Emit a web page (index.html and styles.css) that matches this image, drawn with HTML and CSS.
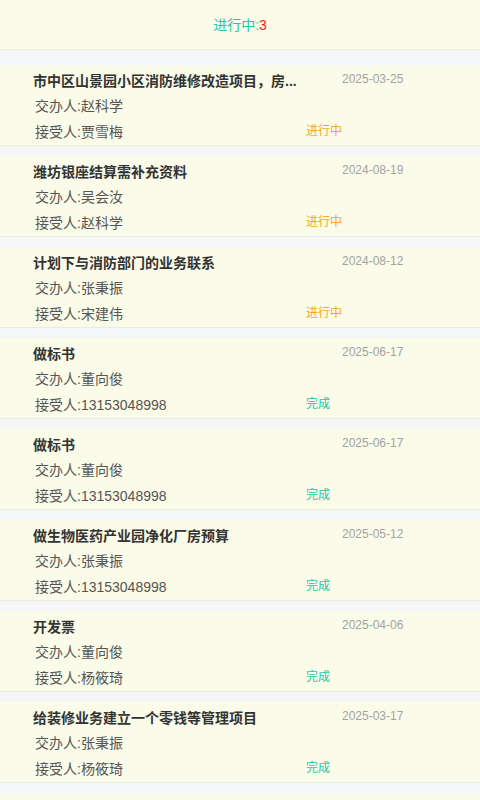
FILE: index.html
```html
<!DOCTYPE html>
<html lang="zh-CN">
<head>
    <meta charset="UTF-8">
    <meta name="viewport" content="width=device-width, initial-scale=1.0">
    <title>任务列表</title>
    <link rel="stylesheet" href="styles.css">
</head>
<body>
    <header class="summary">
        <span class="summary-label">进行中:</span><span class="summary-count">3</span>
    </header>

    <div class="task-list">
        <div class="task">
            <div class="task-row">
                <div class="task-title">市中区山景园小区消防维修改造项目，房...</div>
                <div class="task-date">2025-03-25</div>
            </div>
            <div class="task-row task-person">交办人:赵科学</div>
            <div class="task-row">
                <div class="task-person task-receiver">接受人:贾雪梅</div>
                <div class="task-status doing">进行中</div>
            </div>
        </div>

        <div class="task">
            <div class="task-row">
                <div class="task-title">潍坊银座结算需补充资料</div>
                <div class="task-date">2024-08-19</div>
            </div>
            <div class="task-row task-person">交办人:吴会汝</div>
            <div class="task-row">
                <div class="task-person task-receiver">接受人:赵科学</div>
                <div class="task-status doing">进行中</div>
            </div>
        </div>

        <div class="task">
            <div class="task-row">
                <div class="task-title">计划下与消防部门的业务联系</div>
                <div class="task-date">2024-08-12</div>
            </div>
            <div class="task-row task-person">交办人:张秉振</div>
            <div class="task-row">
                <div class="task-person task-receiver">接受人:宋建伟</div>
                <div class="task-status doing">进行中</div>
            </div>
        </div>

        <div class="task">
            <div class="task-row">
                <div class="task-title">做标书</div>
                <div class="task-date">2025-06-17</div>
            </div>
            <div class="task-row task-person">交办人:董向俊</div>
            <div class="task-row">
                <div class="task-person task-receiver">接受人:13153048998</div>
                <div class="task-status done">完成</div>
            </div>
        </div>

        <div class="task">
            <div class="task-row">
                <div class="task-title">做标书</div>
                <div class="task-date">2025-06-17</div>
            </div>
            <div class="task-row task-person">交办人:董向俊</div>
            <div class="task-row">
                <div class="task-person task-receiver">接受人:13153048998</div>
                <div class="task-status done">完成</div>
            </div>
        </div>

        <div class="task">
            <div class="task-row">
                <div class="task-title">做生物医药产业园净化厂房预算</div>
                <div class="task-date">2025-05-12</div>
            </div>
            <div class="task-row task-person">交办人:张秉振</div>
            <div class="task-row">
                <div class="task-person task-receiver">接受人:13153048998</div>
                <div class="task-status done">完成</div>
            </div>
        </div>

        <div class="task">
            <div class="task-row">
                <div class="task-title">开发票</div>
                <div class="task-date">2025-04-06</div>
            </div>
            <div class="task-row task-person">交办人:董向俊</div>
            <div class="task-row">
                <div class="task-person task-receiver">接受人:杨筱琦</div>
                <div class="task-status done">完成</div>
            </div>
        </div>

        <div class="task">
            <div class="task-row">
                <div class="task-title">给装修业务建立一个零钱等管理项目</div>
                <div class="task-date">2025-03-17</div>
            </div>
            <div class="task-row task-person">交办人:张秉振</div>
            <div class="task-row">
                <div class="task-person task-receiver">接受人:杨筱琦</div>
                <div class="task-status done">完成</div>
            </div>
        </div>

        <div class="task"></div>
    </div>
</body>
</html>
```

FILE: styles.css
```css
body {
    margin: 0;
    padding: 0;
    background-color: #f5f6f8;
    font-family: "Liberation Sans", "Noto Sans CJK SC", sans-serif;
    color: #333;
}
.summary {
    height: 48px;
    padding-top: 1px;
    line-height: 48px;
    text-align: center;
    font-size: 14px;
    background-color: #fafbe9;
    border-bottom: 1px solid #ebebdf;
}
.summary-label {
    color: #22c7a9;
}
.summary-count {
    color: #ff1a1a;
}
.task-list {
    padding-top: 15px;
    display: flex;
    flex-direction: column;
    gap: 10px;
}
.task {
    background-color: #fafbe9;
    border-bottom: 1px solid #ebebdf;
    padding: 2px 0 3px 33px;
    height: 75px;
}
.task-row {
    display: flex;
    align-items: center;
    height: 25px;
}
.task-title {
    width: 273px;
    font-size: 14px;
    font-weight: bold;
    color: #333;
    white-space: nowrap;
    overflow: hidden;
}
.task-date {
    margin-left: 36px;
    margin-top: -1px;
    font-size: 12px;
    color: #a3a3a3;
}
.task-person {
    padding-left: 2px;
    font-size: 14px;
    color: #555;
}
.task-receiver {
    width: 271px;
    padding-top: 2px;
}
.task-status {
    font-size: 12px;
}
.doing {
    color: #f7a823;
}
.done {
    color: #22c7a9;
}
```
